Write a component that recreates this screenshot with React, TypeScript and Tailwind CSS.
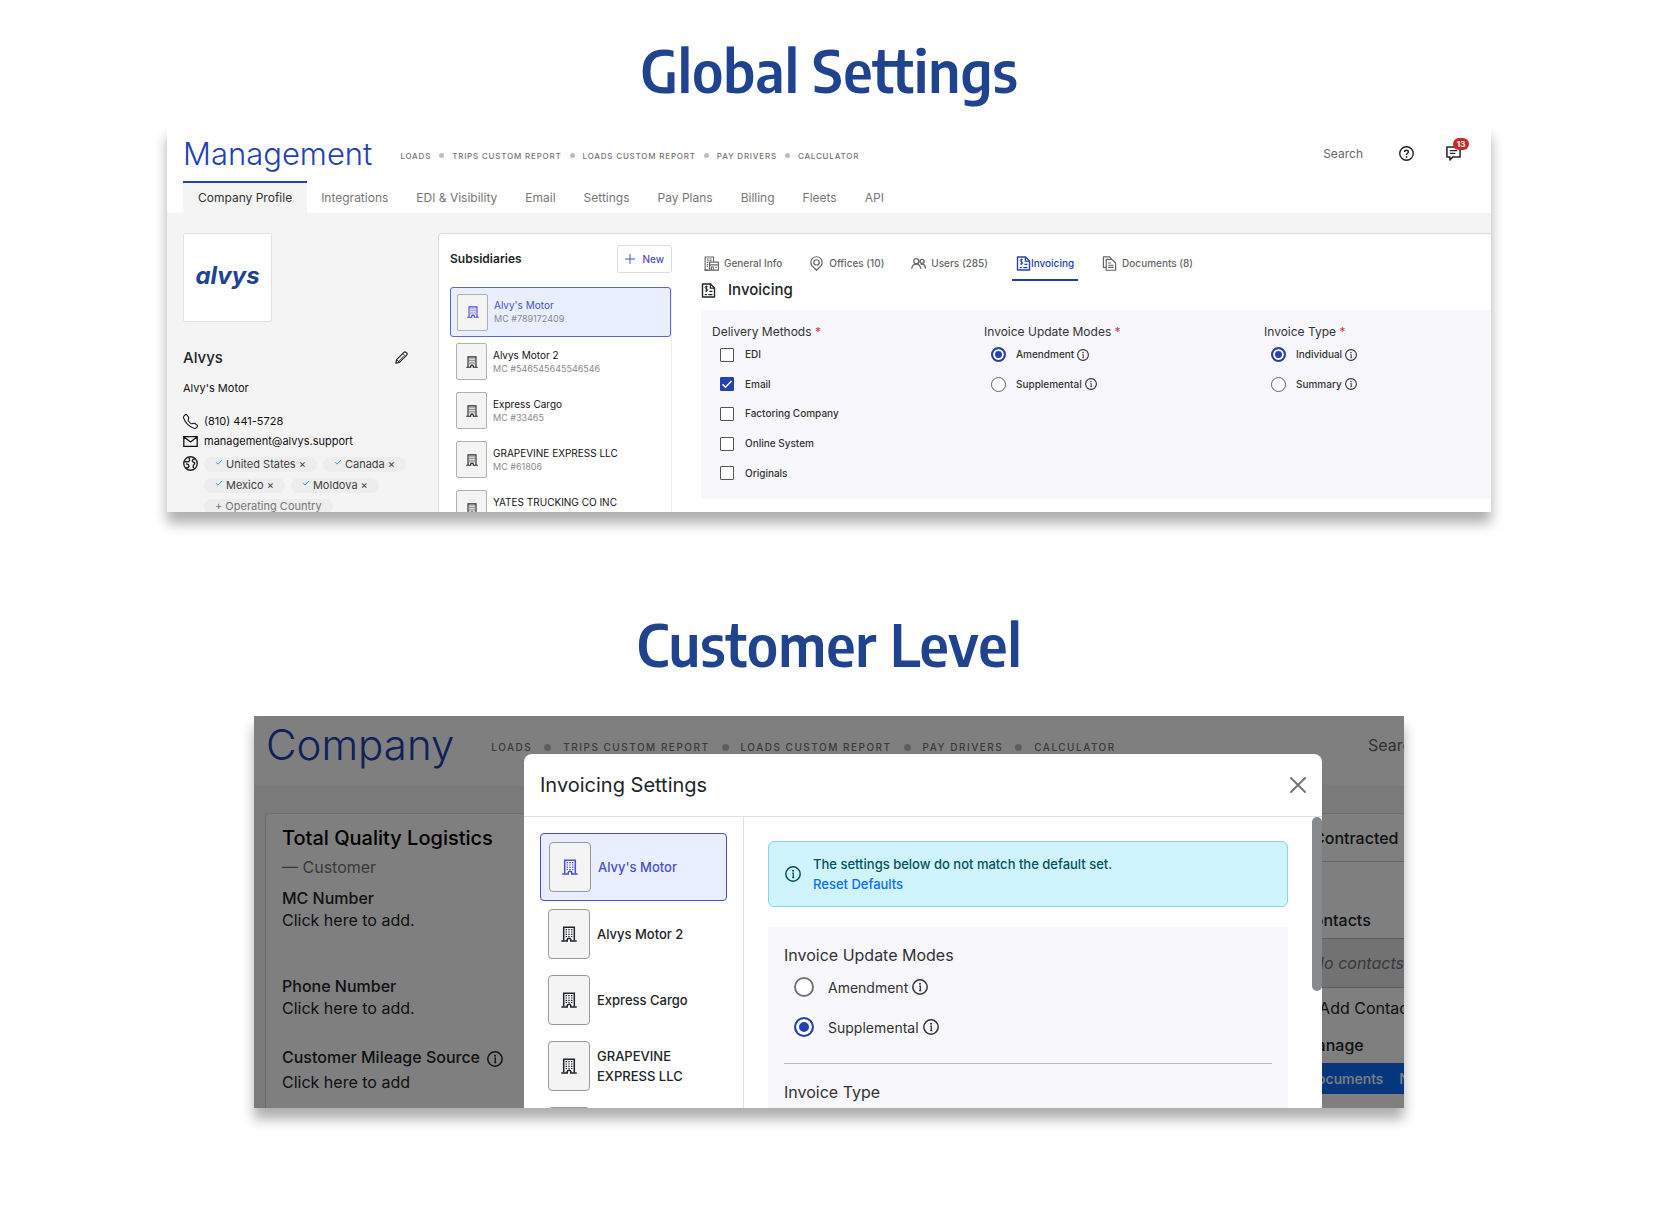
import React from "react";
import { BsTelephone } from "react-icons/bs";

type IconProps = { className?: string };

const inter = "font-['Inter','Liberation_Sans',sans-serif]";

function BuildingIcon({ className = "" }: IconProps) {
  return (
    <svg viewBox="0 0 16 16" fill="none" stroke="currentColor" className={className} aria-hidden="true">
      <path d="M2.700 14.500V1.200h10.600v13.300" strokeWidth="1.500" />
      <path d="M.3 15h5.900v-1a1.800 1.800 0 0 1 3.600 0v1h5.900" strokeWidth="1.600" />
      <path d="M4.600 3.700h6.800M4.600 6h6.800M4.600 8.300h6.800M4.600 10.500h6.800" strokeWidth="1.200" strokeDasharray="1.400 1.300" />
    </svg>
  );
}

function InfoIcon({ className = "" }: IconProps) {
  return (
    <svg viewBox="0 0 16 16" fill="none" stroke="currentColor" className={className} aria-hidden="true">
      <circle cx="8" cy="8" r="7.200" strokeWidth="1.500" />
      <path d="M7.200 7.200H8.300v4.300M7.200 11.500h2" strokeWidth="1.300" />
      <circle cx="8" cy="4.800" r="1" fill="currentColor" stroke="none" />
    </svg>
  );
}

function InvoiceIcon({ className = "" }: IconProps) {
  return (
    <svg viewBox="0 0 16 16" fill="none" stroke="currentColor" className={className} aria-hidden="true">
      <path d="M1.600 1h8.600l4.200 4.200V15H1.600z" strokeWidth="1.500" strokeLinejoin="round" />
      <path d="M10 1v4.400h4.400" strokeWidth="1.300" />
      <path d="M7.400 4.200C6.800 3.300 4.300 3.300 4.300 4.900 4.300 6.500 7.400 5.700 7.400 7.400 7.400 9 4.800 9 4.100 8M5.800 2.800v6.400" strokeWidth="1" />
      <path d="M9 9h3.200M4 12.400h2.200M7.800 12.400h4.400" strokeWidth="1.400" />
    </svg>
  );
}

function OfficeIcon({ className = "" }: IconProps) {
  return (
    <svg viewBox="0 0 16 16" fill="none" stroke="currentColor" className={className} aria-hidden="true">
      <path d="M4.500 15H1.200V1h9v5" strokeWidth="1.200" />
      <path d="M3 3.200h5.500M3 5h5.500M3 7h2M3 9h2M3 11h1.500" strokeWidth="1.100" strokeDasharray="1.300 .4" />
      <path d="M5.500 6.500h10M6 6.500v3h9.500v-3M6 9.500V15h9.500V9.500M.5 15H16" strokeWidth="1.300" />
      <path d="M8 15v-3.200h2V15M12 12h2" strokeWidth="1.100" />
    </svg>
  );
}

function PinIcon({ className = "" }: IconProps) {
  return (
    <svg viewBox="0 0 16 16" fill="none" stroke="currentColor" className={className} aria-hidden="true">
      <path d="M8 15.200 3.300 10.500A6.300 6.300 0 0 1 2 6.800a6 6 0 0 1 12 0c0 1.500-.5 2.700-1.300 3.700z" strokeWidth="1.300" strokeLinejoin="round" />
      <circle cx="8" cy="6.800" r="2.800" strokeWidth="1.300" />
    </svg>
  );
}

function UsersIcon({ className = "" }: IconProps) {
  return (
    <svg viewBox="0 0 16 16" fill="none" stroke="currentColor" className={className} aria-hidden="true">
      <circle cx="5.600" cy="5.500" r="2.700" strokeWidth="1.400" />
      <path d="M.7 13.600c.5-3.200 2.300-5 4.900-5s4.400 1.800 4.900 5" strokeWidth="1.400" />
      <circle cx="11.800" cy="5.700" r="2.200" strokeWidth="1.400" />
      <path d="M10.300 8.900c2.800-1.300 5 1.100 5.200 4.500" strokeWidth="1.400" />
    </svg>
  );
}

function DocumentsIcon({ className = "" }: IconProps) {
  return (
    <svg viewBox="0 0 16 16" fill="none" stroke="currentColor" className={className} aria-hidden="true">
      <path d="M4.200 12.200H1.500V1h6.700l2 2" strokeWidth="1.300" />
      <path d="M4.500 3.500h6l4 4V15.200h-10z" strokeWidth="1.300" strokeLinejoin="round" />
      <path d="M6.500 7.500h3M6.500 9.800h6M6.500 12.200h6" strokeWidth="1.200" />
    </svg>
  );
}

function PencilIcon({ className = "" }: IconProps) {
  return (
    <svg viewBox="0 0 16 16" fill="none" stroke="currentColor" strokeWidth="1.300" strokeLinejoin="round" className={className} aria-hidden="true">
      <path d="m2 14 1-4.200 8.300-8.300a1.700 1.700 0 0 1 2.400 0l.8.800a1.700 1.700 0 0 1 0 2.400L6.200 13z" />
      <path d="M10 3l3 3M3 9.800 6.200 13M11 6 5 12" strokeWidth="1" />
    </svg>
  );
}

function EnvelopeIcon({ className = "" }: IconProps) {
  return (
    <svg viewBox="0 0 16 12" fill="none" stroke="currentColor" strokeWidth="1.400" className={className} aria-hidden="true">
      <path d="M.7.700h14.600v10.600H.7zM.9 1 8 6.600 15.100 1" />
    </svg>
  );
}

function GlobeIcon({ className = "" }: IconProps) {
  return (
    <svg viewBox="0 0 16 16" fill="none" stroke="currentColor" className={className} aria-hidden="true">
      <circle cx="8" cy="8" r="7.200" strokeWidth="1.500" />
      <path d="M1.500 6.200h2.800c2.400 0 3-1.200 2.600-2.600L6.400 1.500M3 12.500c2.500.3 3.700-.6 3.200-2.400C5.900 8.900 4.700 8.500 3.300 8.600" strokeWidth="1.500" />
      <path d="M12.600 3.200c-2 .3-3 1.200-2.600 2.400.5 1.200 2.200.6 2.500 2 .3 1.300-1.500 1.500-1.700 3-.1 1 .3 1.700.6 2.500" strokeWidth="1.500" />
    </svg>
  );
}

function HelpIcon({ className = "" }: IconProps) {
  return (
    <svg viewBox="0 0 16 16" fill="none" stroke="currentColor" className={className} aria-hidden="true">
      <circle cx="8" cy="8" r="7.200" strokeWidth="1.500" />
      <path d="M6 6.400C6 4 10 4 10 6.400 10 7.800 8 7.800 8 9.600" strokeWidth="1.500" />
      <circle cx="8" cy="11.600" r="1" fill="currentColor" stroke="none" />
    </svg>
  );
}

function ChatIcon({ className = "" }: IconProps) {
  return (
    <svg viewBox="0 0 16 16" fill="none" stroke="currentColor" className={className} aria-hidden="true">
      <path d="M1 1h14v10.800H7.200L4.200 15v-3.200H1z" strokeWidth="1.600" strokeLinejoin="round" />
      <path d="M4 5h8M4 7.800h6" strokeWidth="1.400" />
    </svg>
  );
}

function CheckMark({ className = "" }: IconProps) {
  return (
    <svg viewBox="0 0 12 12" fill="none" stroke="currentColor" strokeWidth="1.500" className={className} aria-hidden="true">
      <path d="m1.500 6.200 3 3 6-6.200" />
    </svg>
  );
}

const shortcuts = ["Loads", "Trips Custom Report", "Loads Custom Report", "Pay Drivers", "Calculator"];

function Shortcuts({ large = false }: { large?: boolean }) {
  return (
    <nav
      aria-label="Shortcuts"
      className={
        large
          ? "flex items-center gap-3 text-[10px] font-medium tracking-[0.15em] uppercase"
          : "flex items-center gap-2 text-[8px] font-medium tracking-widest uppercase"
      }
    >
      {shortcuts.map((s, i) => (
        <React.Fragment key={s}>
          {i > 0 && <span className={large ? "size-[7px] rounded-full bg-[#bdbdbd]" : "size-[5px] rounded-full bg-[#bdbdbd]"} />}
          <a href="#" className="text-[#757575]">{s}</a>
        </React.Fragment>
      ))}
    </nav>
  );
}

function Radio({ name, label, on, large = false }: { name: string; label: string; on?: boolean; large?: boolean }) {
  return (
    <div className={large ? "flex h-10 items-center" : "flex items-center"}>
      <label className={large ? "flex items-center gap-[14px] text-[14px]" : "flex items-center gap-[10px] text-[10px] font-medium"}>
        <input
          type="radio"
          name={name}
          defaultChecked={on}
          className={
            large
              ? "size-5 appearance-none rounded-full border-2 border-[#757575] bg-white checked:border-[#2440b3] checked:bg-[#2440b3] checked:shadow-[inset_0_0_0_3px_white]"
              : "size-[15px] appearance-none rounded-full border border-[#666] bg-white checked:border-2 checked:border-[#2440b3] checked:bg-[#2440b3] checked:shadow-[inset_0_0_0_2px_white]"
          }
        />
        {label}
      </label>
      <InfoIcon className={large ? "ml-1 size-4" : "ml-[3px] size-3"} />
    </div>
  );
}

function Checkbox({ label, on }: { label: string; on?: boolean }) {
  return (
    <label className="flex items-center gap-[11px] text-[10px] font-medium">
      <span className="grid place-items-center">
        <input
          type="checkbox"
          defaultChecked={on}
          className="peer col-start-1 row-start-1 size-[14px] appearance-none rounded-[1px] border border-[#555] bg-white checked:border-[#2440b3] checked:bg-[#2440b3]"
        />
        <CheckMark className="pointer-events-none col-start-1 row-start-1 hidden size-3 text-white peer-checked:block" />
      </span>
      {label}
    </label>
  );
}

function Required() {
  return <span className="text-[#dc3545]">*</span>;
}

const subsidiaries = [
  { name: "Alvy's Motor", mc: "MC #789172409" },
  { name: "Alvys Motor 2", mc: "MC #546545645546546" },
  { name: "Express Cargo", mc: "MC #33465" },
  { name: "GRAPEVINE EXPRESS LLC", mc: "MC #61806" },
  { name: "YATES TRUCKING CO INC", mc: "MC #44556" },
];

const detailTabs = [
  { label: "General Info", Icon: OfficeIcon },
  { label: "Offices (10)", Icon: PinIcon },
  { label: "Users (285)", Icon: UsersIcon },
  { label: "Invoicing", Icon: InvoiceIcon },
  { label: "Documents (8)", Icon: DocumentsIcon },
];

function Chip({ children }: { children: string }) {
  return (
    <span className="flex h-[15px] items-center rounded-full bg-[#ededed] px-[11px] text-[11px] text-[#3f3f3f]">
      <CheckMark className="mr-[3px] mb-[6px] size-2 text-[#3f9be0]" />
      {children}
      <button type="button" aria-label={`Remove ${children}`} className="ml-[3px]">×</button>
    </span>
  );
}

function GlobalPanel() {
  return (
    <section className={`${inter} mt-6 max-h-[386px] w-full max-w-[1324px] overflow-hidden bg-white text-[#212529] shadow-[0_11px_12px_rgba(0,0,0,0.32)]`}>
      <header className="flex h-[55px] items-center px-4">
        <h2 className="text-[31px] leading-8 font-light text-[#2440b3]">Management</h2>
        <div className="mt-1 ml-7"><Shortcuts /></div>
        <div className="ml-auto flex items-center pr-[14px]">
          <a href="#" className="text-[12px] text-[#666]">Search</a>
          <button type="button" aria-label="Help" className="ml-9"><HelpIcon className="size-[15px]" /></button>
          <button type="button" aria-label="Messages, 13 unread" className="relative ml-8">
            <ChatIcon className="size-[15px]" />
            <span className="absolute -top-2 left-[7px] flex h-3 w-4 items-center justify-center rounded-full bg-[#c62828] text-[8px] font-bold text-white">13</span>
          </button>
        </div>
      </header>
      <nav aria-label="Management sections" className="flex h-8 px-4 text-[12px]">
        {["Company Profile", "Integrations", "EDI & Visibility", "Email", "Settings", "Pay Plans", "Billing", "Fleets", "API"].map((t, i) => (
          <a
            key={t}
            href="#"
            className={
              i === 0
                ? "flex items-center border-t-2 border-[#2440b3] bg-[#f4f4f4] px-[15px] text-[#333]"
                : "flex items-center border-t-2 border-transparent px-[14px] text-[#777]"
            }
          >
            {t}
          </a>
        ))}
      </nav>
      <div className="flex bg-[#f4f4f4] pt-5">
        <aside className="w-[271px] shrink-0 pr-[30px] pl-4">
          <div className="flex size-[89px] items-center justify-center rounded-[2px] border border-[#e2e2e2] bg-white pb-1">
            <span className="text-[24px] font-bold text-[#20438f] italic">alvys</span>
          </div>
          <div className="mt-[26px] flex h-5 items-center justify-between">
            <h3 className="text-[15px] font-medium">Alvys</h3>
            <button type="button" aria-label="Edit company"><PencilIcon className="size-[14px]" /></button>
          </div>
          <p className="mt-[11px] text-[11px] leading-[18px] text-[#111]">Alvy's Motor</p>
          <div className="mt-[14px] flex h-5 items-center gap-[6px] text-[11px] text-[#111]">
            <BsTelephone className="size-[15px] shrink-0" />(810) 441-5728
          </div>
          <div className="flex h-[21px] items-center gap-[6px] text-[11px] text-[#111]">
            <EnvelopeIcon className="h-[11px] w-[15px] shrink-0" />management@alvys.support
          </div>
          <div className="mt-1 flex items-start gap-[6px]">
            <GlobeIcon className="size-[15px] shrink-0" />
            <div className="flex flex-wrap gap-[6px] pt-[1px]">
              <Chip>United States</Chip>
              <Chip>Canada</Chip>
              <Chip>Mexico</Chip>
              <Chip>Moldova</Chip>
              <button type="button" className="flex h-[15px] items-center rounded-full bg-[#ededed] px-[11px] text-[11px] text-[#757575]">+ Operating Country</button>
            </div>
          </div>
        </aside>
        <div className="flex min-w-0 grow rounded-tl border-t border-l border-[#dcdcdc] bg-white pt-[11px] pl-[11px]">
          <div className="w-[222px] shrink-0">
            <div className="flex h-7 items-center justify-between">
              <h3 className="text-[12px] font-semibold">Subsidiaries</h3>
              <button type="button" className="flex h-7 items-center gap-[7px] rounded-[3px] border border-[#ddd] px-[7px] text-[10px] font-medium text-[#4a4fd0]">
                <svg viewBox="0 0 10 10" className="size-[10px]" stroke="currentColor" aria-hidden="true"><path d="M5 0v10M0 5h10" /></svg>
                New
              </button>
            </div>
            <ul className="mt-[14px] border-r border-[#eee]">
              {subsidiaries.map((s, i) => (
                <li key={s.name}>
                  <button
                    type="button"
                    className={
                      i === 0
                        ? "flex h-[50px] w-full items-center gap-[6px] rounded-[3px] border border-[#5f66cf] bg-[#e9effe] px-[6px] text-left"
                        : "flex h-[49px] w-full items-center gap-[6px] px-[6px] text-left"
                    }
                  >
                    <span className={i === 0 ? "flex h-[37px] w-[31px] items-center justify-center rounded-[2px] border border-[#b0b0b0] bg-[#f4f4f4] text-[#4a4fd0]" : "flex h-[37px] w-[31px] items-center justify-center rounded-[2px] border border-[#b0b0b0] bg-[#f4f4f4]"}>
                      <BuildingIcon className="size-3" />
                    </span>
                    <span className="flex flex-col">
                      <span className={i === 0 ? "text-[10px] leading-[13px] text-[#4a4fd0]" : "text-[10px] leading-[13px] text-[#111]"}>{s.name}</span>
                      <span className="text-[9px] leading-[13px] text-[#8a8a8a]">{s.mc}</span>
                    </span>
                  </button>
                </li>
              ))}
            </ul>
          </div>
          <div className="ml-[29px] min-w-0 grow">
            <nav aria-label="Subsidiary details" className="flex h-9 gap-[21px]">
              {detailTabs.map(({ label, Icon }, i) => (
                <a
                  key={label}
                  href="#"
                  className={
                    i === 3
                      ? "flex items-center border-b-2 border-[#2440b3] px-1 pt-[2px] text-[10px] font-medium text-[#2440b3]"
                      : "flex items-center gap-[5px] border-b-2 border-transparent px-[3px] pt-[2px] text-[10px] font-medium text-[#666]"
                  }
                >
                  <Icon className="size-[15px]" />
                  {label}
                </a>
              ))}
            </nav>
            <h3 className="mt-[1px] flex h-4 items-center gap-3 text-[15px] font-medium">
              <InvoiceIcon className="size-[15px]" />
              Invoicing
            </h3>
            <div className="mt-3 grid grid-cols-[272fr_280fr_227fr] bg-[#f7f7fc] pt-[14px] pb-[11px] pl-[11px] text-[#333]">
              <fieldset>
                <legend className="text-[12px] leading-4">Delivery Methods <Required /></legend>
                <div className="grid h-[148px] grid-rows-5 pl-2">
                  <Checkbox label="EDI" />
                  <Checkbox label="Email" on />
                  <Checkbox label="Factoring Company" />
                  <Checkbox label="Online System" />
                  <Checkbox label="Originals" />
                </div>
              </fieldset>
              <fieldset>
                <legend className="text-[12px] leading-4">Invoice Update Modes <Required /></legend>
                <div className="grid h-[59px] grid-rows-2 pl-[7px]">
                  <Radio name="global-mode" label="Amendment" on />
                  <Radio name="global-mode" label="Supplemental" />
                </div>
              </fieldset>
              <fieldset>
                <legend className="text-[12px] leading-4">Invoice Type <Required /></legend>
                <div className="grid h-[59px] grid-rows-2 pl-[7px]">
                  <Radio name="global-type" label="Individual" on />
                  <Radio name="global-type" label="Summary" />
                </div>
              </fieldset>
            </div>
          </div>
        </div>
      </div>
    </section>
  );
}

function CustomerBackdrop() {
  return (
    <div className="flex h-full flex-col overflow-hidden whitespace-nowrap">
      <header className="flex h-[69px] shrink-0 items-center pl-3">
        <h2 className="mb-3 text-[42px] leading-[44px] font-light text-[#2440b3]">Company</h2>
        <div className="mb-[6px] ml-[37px]"><Shortcuts large /></div>
        <a href="#" className="mb-[11px] ml-auto -mr-[17px] text-[16px] text-[#666]">Search</a>
      </header>
      <div className="flex grow justify-between bg-[#f4f4f4] pt-7 pl-[11px]">
        <div className="flex grow justify-between rounded-tl border-t border-l border-[#dcdcdc] bg-white">
          <div className="pt-3 pl-4 text-[16px] leading-[22px]">
            <h3 className="text-[20px] leading-6 font-medium text-black">Total Quality Logistics</h3>
            <p className="mt-[6px] text-[#6c757d]">— Customer</p>
            <p className="mt-[9px] font-medium">MC Number</p>
            <p>Click here to add.</p>
            <p className="mt-11 font-medium">Phone Number</p>
            <p>Click here to add.</p>
            <p className="mt-[27px] flex items-center font-medium">Customer Mileage Source <InfoIcon className="mt-1 ml-[7px] size-4" /></p>
            <p className="mt-[3px]">Click here to add</p>
          </div>
          <div className="w-[102px] text-[16px] leading-6">
            <p className="flex h-12 items-center border-b border-[#ccc] pl-[11px] font-medium">Contracted</p>
            <p className="mt-[46px] h-[30px] font-medium">Contacts</p>
            <p className="flex h-[50px] items-center border-y border-[#bbb] bg-[#e4e4e4] pl-[10px] text-[#6c757d] italic">No contacts</p>
            <p className="mt-2 pl-[2px]">+ Add Contact</p>
            <p className="mt-[13px] font-medium">Manage</p>
            <div className="mt-[6px] flex h-[31px] items-center gap-4 bg-[#0d6efd] pl-[5px] text-[14px] font-medium text-white">
              <span>Documents</span>
              <span>Notes</span>
            </div>
          </div>
        </div>
      </div>
    </div>
  );
}

function SettingsDialog() {
  return (
    <div role="dialog" aria-label="Invoicing Settings" className="absolute inset-x-0 top-[38px] bottom-0 mx-auto flex w-[798px] max-w-full translate-x-[94px] flex-col overflow-hidden rounded-t-lg bg-white">
      <div className="flex h-[63px] shrink-0 items-center justify-between border-b border-[#dee2e6] px-4">
        <h3 className="text-[20px]">Invoicing Settings</h3>
        <button type="button" aria-label="Close">
          <svg viewBox="0 0 16 16" className="size-4 text-[#757575]" stroke="currentColor" strokeWidth="2" strokeLinecap="round" aria-hidden="true"><path d="m1 1 14 14M15 1 1 15" /></svg>
        </button>
      </div>
      <div className="flex min-h-0 grow overflow-hidden">
        <ul className="w-[220px] shrink-0 border-r border-[#dee2e6] px-4 pt-4">
          {subsidiaries.map((s, i) => (
            <li key={s.name}>
              <button
                type="button"
                className={
                  i === 0
                    ? "flex h-[68px] w-full items-center gap-[7px] rounded border border-[#4a4fd0] bg-[#e9effe] px-2 text-left text-[13px] leading-5 font-medium text-[#4a4fd0]"
                    : "flex h-[66px] w-full items-center gap-[7px] px-2 text-left text-[13px] leading-5 font-medium"
                }
              >
                <span className="flex h-[50px] w-[42px] shrink-0 items-center justify-center rounded border border-[#999] bg-[#f4f4f4]">
                  <BuildingIcon className="size-4" />
                </span>
                {s.name}
              </button>
            </li>
          ))}
        </ul>
        <div className="grow pt-6 pl-6">
          <div className="flex h-[66px] items-center gap-3 rounded-md border border-[#85d9e6] bg-[#cff4fc] px-4 text-[13px] leading-5 font-medium text-[#055160]">
            <InfoIcon className="size-4" />
            <div>
              <p>The settings below do not match the default set.</p>
              <a href="#" className="text-[#0d6efd]">Reset Defaults</a>
            </div>
          </div>
          <div className="mt-5 bg-[#f7f7fc] px-4 pt-4 pb-6 text-[16px] text-[#333]">
            <fieldset>
              <legend className="leading-6">Invoice Update Modes</legend>
              <div className="pl-[10px]">
                <Radio name="customer-mode" label="Amendment" large />
                <Radio name="customer-mode" label="Supplemental" on large />
              </div>
            </fieldset>
            <hr className="mt-4 border-[#bbb]" />
            <p className="mt-4 leading-6">Invoice Type</p>
          </div>
        </div>
        <div className="ml-6 w-[10px] shrink-0">
          <div className="h-[174px] rounded-full bg-[#868a8d]" />
        </div>
      </div>
    </div>
  );
}

const title = "text-[58px] leading-[64px] font-semibold text-[#20438f] font-['Encode_Sans_Semi_Condensed','Noto_Sans_SemiCondensed','Noto_Sans_Condensed','Open_Sans_Condensed','Noto_Sans',sans-serif]";

export default function App() {
  return (
    <main className="flex min-h-screen flex-col items-center bg-white pt-[38px] pb-[109px]">
      <h1 className={title}>Global Settings</h1>
      <GlobalPanel />
      <h1 className={`${title} mt-[100px]`}>Customer Level</h1>
      <section className={`${inter} relative mt-10 h-[392px] w-full max-w-[1150px] overflow-hidden bg-white text-[#212529] shadow-[0_11px_12px_rgba(0,0,0,0.32)]`}>
        <CustomerBackdrop />
        <div className="absolute inset-0 bg-black/50" />
        <SettingsDialog />
      </section>
    </main>
  );
}
